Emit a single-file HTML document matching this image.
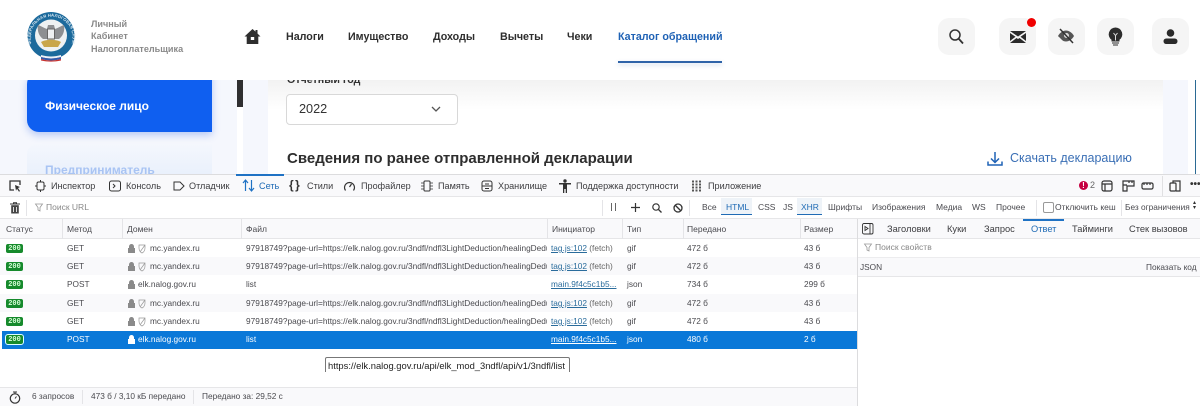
<!DOCTYPE html>
<html lang="ru"><head><meta charset="utf-8"><title>Сеть</title>
<style>
html,body{margin:0;padding:0;width:1200px;height:406px;overflow:hidden;background:#fff}
body{position:relative;font-family:"Liberation Sans",sans-serif}
.a{position:absolute;white-space:nowrap}
.n{font-size:10.7px;font-weight:700;color:#2e2e2e;top:30px;line-height:14px}
.l{font-size:9.1px;font-weight:700;color:#8a8a8a;left:91px;line-height:12px}
.ib{position:absolute;top:18px;width:37px;height:37px;border-radius:11px;background:#f5f5f5}
.t{font-size:9.1px;color:#3d3d40;top:180px;line-height:12px}
.f{font-size:8.5px;color:#4a4a4f;top:202px;line-height:11px}
.h{font-size:8.5px;color:#4a4a4f;top:224px;line-height:11px}
.c{font-size:8.3px;color:#4a4a4f;line-height:11px}
.v{position:absolute;width:1px;background:#e4e4e7}
.b{position:absolute;left:6px;width:17px;height:9px;background:#168a2c;color:#d8ffd8;border-radius:2px;font:700 7px/10px "Liberation Mono",monospace;text-align:center;overflow:hidden}
.lk{color:#2a6c9c;text-decoration:underline}
.g{color:#666}
svg{position:absolute;overflow:visible}
</style></head><body>

<!-- page background -->
<div class="a" style="left:0;top:80px;width:1188px;height:96px;background:#f5f7fd"></div>
<div class="a" style="left:237px;top:80px;width:6px;height:96px;background:#fff"></div>
<div class="a" style="left:237px;top:80px;width:6px;height:27px;background:#2f2f31"></div>
<div class="a" style="left:268px;top:80px;width:895px;height:96px;background:linear-gradient(#f2f2f2,#fff 30px)"></div>
<div class="a" style="left:1195px;top:80px;width:1px;height:94px;background:#2b6a94"></div>

<!-- sidebar -->
<div class="a" style="left:27px;top:72px;width:185px;height:60px;background:#0f5ff0;border-radius:12px 0 0 12px;box-shadow:0 3px 8px rgba(30,90,230,.3)"></div>
<div class="a" style="left:45px;top:99px;font-size:12px;font-weight:700;color:#fff;line-height:14px">Физическое лицо</div>
<div class="a" style="left:27px;top:144px;width:185px;height:32px;background:linear-gradient(#f4f7fd,#e9f0fc);border-radius:10px 0 0 0;overflow:hidden">
  <div class="a" style="left:18px;top:19px;font-size:12px;font-weight:700;color:#a9c4f3;line-height:14px">Предприниматель</div>
</div>

<!-- form -->
<div class="a" style="left:287px;top:74px;font-size:10.7px;font-weight:700;color:#333;line-height:13px;height:13px;clip-path:inset(6px 0 0 0)">Отчетный год</div>
<div class="a" style="left:286px;top:94px;width:170px;height:29px;border:1px solid #d8d8d8;border-radius:4px;background:#fff"></div>
<div class="a" style="left:299px;top:102px;font-size:12.7px;color:#333;line-height:15px">2022</div>
<svg style="left:431px;top:106px" width="10" height="7" viewBox="0 0 10 7"><path d="M1 1l4 4 4-4" fill="none" stroke="#555" stroke-width="1.3"/></svg>
<div class="a" style="left:287px;top:150px;font-size:15px;font-weight:700;color:#2e2e2e;line-height:18px">Сведения по ранее отправленной декларации</div>
<svg style="left:987px;top:151px" width="16" height="16" viewBox="0 0 16 16"><path d="M8 1v10M4 7.500l4 4 4-4M1 10.500v3.500h14v-3.500" fill="none" stroke="#1f62b5" stroke-width="1.500"/></svg>
<div class="a" style="left:1010px;top:151px;font-size:12.5px;color:#3a6fb5;line-height:15px">Скачать декларацию</div>

<!-- header -->
<div class="a" style="left:0;top:0;width:1200px;height:80px;background:#fff"></div>
<svg style="left:27px;top:12px" width="49" height="50" viewBox="0 0 49 50">
  <defs><path id="ring" d="M4.500 32a21 21 0 1 1 40 0"/></defs>
  <circle cx="24" cy="23.500" r="23.500" fill="#1c6a9c"/><circle cx="24" cy="23.500" r="16" fill="#eef1f2"/>
  <text font-family="Liberation Sans" font-size="4.2" font-weight="700" fill="#dbe9f2" letter-spacing=".15"><textPath href="#ring">ФЕДЕРАЛЬНАЯ НАЛОГОВАЯ СЛУЖБА</textPath></text>
  <path d="M11 13c3 1 6 3 9 4l1-4h6l1 4c3-1 6-3 9-4 1 6-1 11-5 14H16c-4-3-6-8-5-14z" fill="#8d8f92"/>
  <rect x="20.500" y="17" width="7" height="10" fill="#eef0f2" stroke="#666"/>
  <path d="M14 30c5-3 15-3 20 0l-3 5H17z" fill="#c9a64a"/>
  <path d="M14 43c7 2 13 2 20 0v2c-7 2-13 2-20 0z" fill="#eef0f6"/>
  <path d="M14 45c7 2 13 2 20 0v2c-7 2-13 2-20 0z" fill="#3458a8"/>
  <path d="M14 47c7 2 13 2 20 0v1.500c-7 1.500-13 1.500-20 0z" fill="#c8332f"/>
</svg>
<div class="a l" style="top:18px">Личный</div>
<div class="a l" style="top:30px">Кабинет</div>
<div class="a l" style="top:43px">Налогоплательщика</div>
<svg style="left:244px;top:28px" width="17" height="17" viewBox="0 0 17 17"><path d="M8.500 1L0.500 8.500h2.200V16h11.600V8.500h2.200L13.500 5.500V2h-2v1.600z" fill="#2e2e2e"/><rect x="6.800" y="9" width="3.400" height="3" fill="#fff"/></svg>
<div class="a n" style="left:286px">Налоги</div>
<div class="a n" style="left:348px">Имущество</div>
<div class="a n" style="left:433px">Доходы</div>
<div class="a n" style="left:500px">Вычеты</div>
<div class="a n" style="left:567px">Чеки</div>
<div class="a n" style="left:618px;color:#1f62b5">Каталог обращений</div>
<div class="a" style="left:618px;top:61px;width:104px;height:2px;background:#2f63a8;box-shadow:0 2px 4px rgba(47,99,168,.25)"></div>

<div class="ib" style="left:938px"></div>
<svg style="left:949px;top:29px" width="15" height="16" viewBox="0 0 15 16"><circle cx="6" cy="6" r="5" fill="none" stroke="#333" stroke-width="1.500"/><path d="M9.500 9.500l4.500 5" stroke="#333" stroke-width="1.800"/></svg>
<div class="ib" style="left:999px"></div>
<svg style="left:1010px;top:31px" width="16" height="12" viewBox="0 0 16 12"><path d="M0 0h16L8 5.500zM0 2l5.500 3.800L0 10zM16 2l-5.500 3.800L16 10zM0 12l6.500-5L8 8l1.500-1L16 12z" fill="#2b2b2b"/></svg>
<div class="a" style="left:1027px;top:18px;width:9px;height:9px;border-radius:50%;background:#f00000"></div>
<div class="ib" style="left:1048px"></div>
<svg style="left:1057px;top:28px" width="18" height="16" viewBox="0 0 18 16"><path d="M1 8c2-3.500 5-5.500 8-5.500s6 2 8 5.500c-2 3.500-5 5.500-8 5.500S3 11.500 1 8z" fill="#555"/><circle cx="9.500" cy="7.500" r="2.500" fill="#ddd"/><path d="M3 1l13 14" stroke="#333" stroke-width="1.500"/><path d="M1 9l6 6" stroke="#f5f5f5" stroke-width="1.500"/></svg>
<div class="ib" style="left:1097px"></div>
<svg style="left:1108px;top:27px" width="15" height="19" viewBox="0 0 15 19"><path d="M7.500 0.500a6.800 6.800 0 0 0-4 12.300v1.700h8v-1.700a6.800 6.800 0 0 0-4-12.300z" fill="#2d2d2d"/><path d="M5.500 6l2 2.500 2-2.500M7.500 8.500v5" stroke="#ddd" fill="none"/><path d="M4 15.500h7v1H4zM5 17.500h5v1H5z" fill="#2d2d2d"/></svg>
<div class="ib" style="left:1152px"></div>
<svg style="left:1163px;top:29px" width="15" height="16" viewBox="0 0 15 16"><circle cx="7.500" cy="4" r="3.800" fill="#2b2b2b"/><rect x="0.500" y="9.500" width="14" height="5.500" rx="2.700" fill="#2b2b2b"/></svg>

<!-- devtools -->
<div class="a" style="left:0;top:174px;width:1200px;height:232px;background:#fff;border-top:1px solid #dcdcde;box-sizing:border-box"></div>
<div class="a" style="left:0;top:175px;width:1200px;height:22px;background:#f9f9fb;border-bottom:1px solid #e6e6e8;box-sizing:border-box"></div>
<div class="a" style="left:236px;top:174px;width:48px;height:2px;background:#1f72c4"></div>

<svg style="left:9px;top:180px" width="12" height="12" viewBox="0 0 12 12"><path d="M11 5V1H1v9h4" fill="none" stroke="#333" stroke-width="1.300"/><path d="M6 5l5 2-2 1 2 3-1 .7-2-3-1 2z" fill="#333"/></svg>
<svg style="left:35px;top:180px" width="11" height="12" viewBox="0 0 11 12"><rect x="2" y="2" width="7" height="8" rx="1.500" fill="none" stroke="#333"/><path d="M5.500 0v2M5.500 10v2M0 6h2M9 6h2" stroke="#333"/></svg>
<div class="a t" style="left:51px">Инспектор</div>
<svg style="left:109px;top:180px" width="12" height="12" viewBox="0 0 12 12"><rect x=".5" y="1" width="11" height="10" rx="2" fill="none" stroke="#333"/><path d="M4 4l2 2-2 2" fill="none" stroke="#333"/></svg>
<div class="a t" style="left:126px">Консоль</div>
<svg style="left:173px;top:180px" width="12" height="12" viewBox="0 0 12 12"><path d="M1 2h6l4 4-4 4H1z" fill="none" stroke="#333"/></svg>
<div class="a t" style="left:189px">Отладчик</div>
<svg style="left:242px;top:179px" width="13" height="13" viewBox="0 0 13 13"><path d="M3.500 12V1M1 4l2.500-3L6 4M9.500 1v11M7 9l2.500 3L12 9" fill="none" stroke="#1f72c4" stroke-width="1.200"/></svg>
<div class="a t" style="left:259px;color:#1f6bb5">Сеть</div>
<div class="a" style="left:289px;top:178px;font-size:12px;font-weight:700;color:#333;line-height:14px;letter-spacing:1.500px">{}</div>
<div class="a t" style="left:307px">Стили</div>
<svg style="left:343px;top:180px" width="13" height="12" viewBox="0 0 13 12"><path d="M2.500 10.500a5 5 0 1 1 8 0M6.500 7l2-3" fill="none" stroke="#333" stroke-width="1.200"/></svg>
<div class="a t" style="left:361px">Профайлер</div>
<svg style="left:421px;top:180px" width="12" height="12" viewBox="0 0 12 12"><rect x="3" y="1" width="6" height="10" rx="1" fill="none" stroke="#333"/><path d="M0 3h3M0 6h3M0 9h3M9 3h3M9 6h3M9 9h3" stroke="#333" stroke-width=".8"/></svg>
<div class="a t" style="left:438px">Память</div>
<svg style="left:481px;top:180px" width="12" height="12" viewBox="0 0 12 12"><rect x="1" y="1" width="10" height="10" rx="2" fill="none" stroke="#333"/><path d="M1 6h10M4 4h4M4 8.500h4" stroke="#333"/></svg>
<div class="a t" style="left:498px">Хранилище</div>
<svg style="left:559px;top:179px" width="12" height="14" viewBox="0 0 12 14"><circle cx="6" cy="2" r="1.700" fill="#333"/><path d="M0 4h12v1.500H8V14H6.700V10H5.300V14H4V5.500H0z" fill="#333"/></svg>
<div class="a t" style="left:576px">Поддержка доступности</div>
<svg style="left:691px;top:180px" width="11" height="12" viewBox="0 0 11 12"><path d="M1 1.500h9M1 4.500h9M1 7.500h9M1 10.500h9" stroke="#555" stroke-width="2" stroke-dasharray="2 1.500" fill="none"/></svg>
<div class="a t" style="left:708px">Приложение</div>

<div class="a" style="left:1079px;top:181px;width:9px;height:9px;border-radius:50%;background:#c50042;color:#fff;font:700 8px/9px 'Liberation Sans',sans-serif;text-align:center">!</div>
<div class="a" style="left:1090px;top:180px;font-size:9px;color:#666;line-height:11px">2</div>
<svg style="left:1101px;top:180px" width="72" height="12" viewBox="0 0 72 12" fill="none" stroke="#333" stroke-width="1.200"><rect x="1" y="1" width="10" height="10" rx="2"/><path d="M1 4h10M4 4v7"/><path d="M22 11V1h11v5h-7v5zM22 5h4M28 1v2M31 1v2"/><rect x="41" y="3" width="11" height="6" rx="1.500"/><path d="M43 3v2M46 3v2M49 3v2"/></svg>
<div class="a" style="left:1162px;top:176px;width:1px;height:20px;background:#e0e0e2"></div>
<svg style="left:1169px;top:180px" width="12" height="12" viewBox="0 0 12 12" fill="none" stroke="#333" stroke-width="1.200"><rect x="1" y="3" width="6" height="8" rx="1"/><path d="M4 3V1h7v10H7"/></svg>
<div class="a" style="left:1190px;top:179px;font-size:10px;font-weight:700;color:#333;line-height:12px;letter-spacing:0">•••</div>

<!-- network toolbar -->
<div class="a" style="left:0;top:197px;width:1200px;height:22px;background:#fff;border-bottom:1px solid #e6e6e8;box-sizing:border-box"></div>
<svg style="left:10px;top:202px" width="10" height="12" viewBox="0 0 10 12"><path d="M0 2h10M3.500 2V.8h3V2" fill="none" stroke="#333"/><path d="M1.200 3.200h7.600v8.300H1.200z" fill="#444"/><path d="M3.500 5v5M6.500 5v5" stroke="#ddd"/></svg>
<div class="v" style="left:26px;top:200px;height:16px"></div>
<svg style="left:35px;top:203px" width="8" height="9" viewBox="0 0 8 9"><path d="M.5 1h7L5 4.500V8L3 7V4.500z" fill="none" stroke="#999" stroke-width=".8"/></svg>
<div class="a f" style="left:46px;color:#888">Поиск URL</div>
<div class="v" style="left:602px;top:200px;height:16px"></div>
<div class="a" style="left:611px;top:203px;width:1px;height:8px;background:#666"></div>
<div class="a" style="left:615px;top:203px;width:1px;height:8px;background:#666"></div>
<svg style="left:631px;top:203px" width="9" height="9" viewBox="0 0 9 9"><path d="M4.500 0v9M0 4.500h9" stroke="#333" stroke-width="1.200"/></svg>
<svg style="left:652px;top:203px" width="10" height="10" viewBox="0 0 10 10"><circle cx="4" cy="4" r="3.200" fill="none" stroke="#333" stroke-width="1.200"/><path d="M6.500 6.500l3 3" stroke="#333" stroke-width="1.300"/></svg>
<svg style="left:673px;top:203px" width="10" height="10" viewBox="0 0 10 10"><circle cx="5" cy="5" r="4" fill="none" stroke="#333" stroke-width="1.300"/><path d="M2 2l6 6" stroke="#333" stroke-width="1.300"/></svg>
<div class="v" style="left:689px;top:200px;height:16px"></div>
<div class="a f" style="left:702px">Все</div>
<div class="a" style="left:721px;top:198px;width:31px;height:17px;background:#eef3f8;border-bottom:1px solid #1f6bb5;box-sizing:border-box"></div>
<div class="a f" style="left:726px;color:#1f6bb5">HTML</div>
<div class="a f" style="left:758px">CSS</div>
<div class="a f" style="left:783px">JS</div>
<div class="a" style="left:797px;top:198px;width:25px;height:17px;background:#eef3f8;border-bottom:1px solid #1f6bb5;box-sizing:border-box"></div>
<div class="a f" style="left:801px;color:#1f6bb5">XHR</div>
<div class="a f" style="left:828px">Шрифты</div>
<div class="a f" style="left:872px">Изображения</div>
<div class="a f" style="left:936px">Медиа</div>
<div class="a f" style="left:972px">WS</div>
<div class="a f" style="left:996px">Прочее</div>
<div class="v" style="left:1036px;top:200px;height:16px"></div>
<div class="a" style="left:1043px;top:202px;width:9px;height:9px;border:1px solid #999;border-radius:2px;background:#fff"></div>
<div class="a f" style="left:1055px">Отключить кеш</div>
<div class="v" style="left:1121px;top:200px;height:16px"></div>
<div class="a f" style="left:1125px;font-size:8.3px">Без ограничения</div>
<div class="a" style="left:1193px;top:201px;font-size:6px;line-height:5px;color:#333;white-space:normal;width:7px">▴<br>▾</div>

<!-- table -->
<div class="a" style="left:0;top:219px;width:857px;height:20px;background:#f9f9fb;border-bottom:1px solid #e6e6e8;box-sizing:border-box"></div>
<div class="a" style="left:857px;top:219px;width:343px;height:20px;background:#f9f9fb;border-bottom:1px solid #e6e6e8;box-sizing:border-box"></div>
<div class="a h" style="left:6px">Статус</div>
<div class="a h" style="left:67px">Метод</div>
<div class="a h" style="left:127px">Домен</div>
<div class="a h" style="left:246px">Файл</div>
<div class="a h" style="left:552px">Инициатор</div>
<div class="a h" style="left:627px">Тип</div>
<div class="a h" style="left:687px">Передано</div>
<div class="a h" style="left:804px">Размер</div>
<div class="v" style="left:62px;top:219px;height:20px"></div>
<div class="v" style="left:122px;top:219px;height:20px"></div>
<div class="v" style="left:241px;top:219px;height:20px"></div>
<div class="v" style="left:547px;top:219px;height:20px"></div>
<div class="v" style="left:622px;top:219px;height:20px"></div>
<div class="v" style="left:683px;top:219px;height:20px"></div>
<div class="v" style="left:800px;top:219px;height:20px"></div>

<div class="a" style="left:0;top:257px;width:857px;height:18px;background:#f9f9fb"></div>
<div class="a" style="left:0;top:294px;width:857px;height:18px;background:#f9f9fb"></div>
<div class="a" style="left:2px;top:331px;width:855px;height:18px;background:#0a78d8"></div>

<!-- row 1 -->
<div class="a b" style="top:244px">200</div><div class="a c" style="left:67px;top:243px">GET</div>
<svg style="left:127px;top:244px" width="19" height="9" viewBox="0 0 19 9"><path d="M2 4V2.500a2.500 2.500 0 0 1 5 0V4h1v5H1V4z" fill="#8a8a8a"/><path d="M12 1h6v3c0 2-1 4-3 5-2-1-3-3-3-5zM13 8l5-7" fill="none" stroke="#999" stroke-width=".7"/></svg>
<div class="a c" style="left:150px;top:243px">mc.yandex.ru</div>
<div class="a c" style="left:246px;top:243px;width:301px;overflow:hidden">97918749?page-url=https://elk.nalog.gov.ru/3ndfl/ndfl3LightDeduction/healingDeduction</div>
<div class="a c" style="left:551px;top:243px"><span class="lk">tag.js:102</span> <span class="g">(fetch)</span></div>
<div class="a c" style="left:627px;top:243px">gif</div><div class="a c" style="left:687px;top:243px">472 б</div><div class="a c" style="left:804px;top:243px">43 б</div>
<!-- row 2 -->
<div class="a b" style="top:262px">200</div><div class="a c" style="left:67px;top:261px">GET</div>
<svg style="left:127px;top:262px" width="19" height="9" viewBox="0 0 19 9"><path d="M2 4V2.500a2.500 2.500 0 0 1 5 0V4h1v5H1V4z" fill="#8a8a8a"/><path d="M12 1h6v3c0 2-1 4-3 5-2-1-3-3-3-5zM13 8l5-7" fill="none" stroke="#999" stroke-width=".7"/></svg>
<div class="a c" style="left:150px;top:261px">mc.yandex.ru</div>
<div class="a c" style="left:246px;top:261px;width:301px;overflow:hidden">97918749?page-url=https://elk.nalog.gov.ru/3ndfl/ndfl3LightDeduction/healingDeduction</div>
<div class="a c" style="left:551px;top:261px"><span class="lk">tag.js:102</span> <span class="g">(fetch)</span></div>
<div class="a c" style="left:627px;top:261px">gif</div><div class="a c" style="left:687px;top:261px">472 б</div><div class="a c" style="left:804px;top:261px">43 б</div>
<!-- row 3 -->
<div class="a b" style="top:280px">200</div><div class="a c" style="left:67px;top:279px">POST</div>
<svg style="left:127px;top:280px" width="9" height="9" viewBox="0 0 9 9"><path d="M2 4V2.500a2.500 2.500 0 0 1 5 0V4h1v5H1V4z" fill="#8a8a8a"/></svg>
<div class="a c" style="left:138px;top:279px">elk.nalog.gov.ru</div>
<div class="a c" style="left:246px;top:279px">list</div>
<div class="a c" style="left:551px;top:279px"><span class="lk">main.9f4c5c1b5...</span></div>
<div class="a c" style="left:627px;top:279px">json</div><div class="a c" style="left:687px;top:279px">734 б</div><div class="a c" style="left:804px;top:279px">299 б</div>
<!-- row 4 -->
<div class="a b" style="top:299px">200</div><div class="a c" style="left:67px;top:298px">GET</div>
<svg style="left:127px;top:299px" width="19" height="9" viewBox="0 0 19 9"><path d="M2 4V2.500a2.500 2.500 0 0 1 5 0V4h1v5H1V4z" fill="#8a8a8a"/><path d="M12 1h6v3c0 2-1 4-3 5-2-1-3-3-3-5zM13 8l5-7" fill="none" stroke="#999" stroke-width=".7"/></svg>
<div class="a c" style="left:150px;top:298px">mc.yandex.ru</div>
<div class="a c" style="left:246px;top:298px;width:301px;overflow:hidden">97918749?page-url=https://elk.nalog.gov.ru/3ndfl/ndfl3LightDeduction/healingDeduction</div>
<div class="a c" style="left:551px;top:298px"><span class="lk">tag.js:102</span> <span class="g">(fetch)</span></div>
<div class="a c" style="left:627px;top:298px">gif</div><div class="a c" style="left:687px;top:298px">472 б</div><div class="a c" style="left:804px;top:298px">43 б</div>
<!-- row 5 -->
<div class="a b" style="top:317px">200</div><div class="a c" style="left:67px;top:316px">GET</div>
<svg style="left:127px;top:317px" width="19" height="9" viewBox="0 0 19 9"><path d="M2 4V2.500a2.500 2.500 0 0 1 5 0V4h1v5H1V4z" fill="#8a8a8a"/><path d="M12 1h6v3c0 2-1 4-3 5-2-1-3-3-3-5zM13 8l5-7" fill="none" stroke="#999" stroke-width=".7"/></svg>
<div class="a c" style="left:150px;top:316px">mc.yandex.ru</div>
<div class="a c" style="left:246px;top:316px;width:301px;overflow:hidden">97918749?page-url=https://elk.nalog.gov.ru/3ndfl/ndfl3LightDeduction/healingDeduction</div>
<div class="a c" style="left:551px;top:316px"><span class="lk">tag.js:102</span> <span class="g">(fetch)</span></div>
<div class="a c" style="left:627px;top:316px">gif</div><div class="a c" style="left:687px;top:316px">472 б</div><div class="a c" style="left:804px;top:316px">43 б</div>
<!-- row 6 -->
<div class="a b" style="top:335px;outline:1px solid #dff;outline-offset:0">200</div><div class="a c" style="left:67px;top:334px;color:#fff">POST</div>
<svg style="left:127px;top:335px" width="9" height="9" viewBox="0 0 9 9"><path d="M2 4V2.500a2.500 2.500 0 0 1 5 0V4h1v5H1V4z" fill="#fff"/></svg>
<div class="a c" style="left:138px;top:334px;color:#fff">elk.nalog.gov.ru</div>
<div class="a c" style="left:246px;top:334px;color:#fff">list</div>
<div class="a c" style="left:551px;top:334px;color:#fff;text-decoration:underline">main.9f4c5c1b5...</div>
<div class="a c" style="left:627px;top:334px;color:#fff">json</div><div class="a c" style="left:687px;top:334px;color:#fff">480 б</div><div class="a c" style="left:804px;top:334px;color:#fff">2 б</div>

<!-- tooltip -->
<div class="a" style="left:325px;top:357px;width:245px;height:15px;border:1px solid #777;border-bottom:0;border-radius:2px 2px 0 0;box-sizing:border-box;background:#fff;font-size:9.4px;line-height:15px;color:#222;padding-left:2px;overflow:hidden">https://elk.nalog.gov.ru/api/elk_mod_3ndfl/api/v1/3ndfl/list</div>

<!-- footer -->
<div class="a" style="left:0;top:387px;width:857px;height:19px;background:#f9f9fb;border-top:1px solid #e6e6e8;box-sizing:border-box"></div>
<svg style="left:9px;top:391px" width="12" height="13" viewBox="0 0 12 13"><circle cx="6" cy="7.500" r="4.700" fill="none" stroke="#333" stroke-width="1.200"/><path d="M4 1h4M6 1v2M6 7.500l1.500-2" stroke="#333"/></svg>
<div class="a c" style="left:32px;top:391px">6 запросов</div>
<div class="v" style="left:82px;top:390px;height:14px"></div>
<div class="a c" style="left:91px;top:391px">473 б / 3,10 кБ передано</div>
<div class="v" style="left:193px;top:390px;height:14px"></div>
<div class="a c" style="left:202px;top:391px">Передано за: 29,52 с</div>

<!-- right panel -->
<div class="a" style="left:857px;top:219px;width:1px;height:187px;background:#dcdcde"></div>
<svg style="left:862px;top:223px" width="12" height="12" viewBox="0 0 12 12" fill="none" stroke="#333" stroke-width=".9"><rect x=".5" y=".5" width="10.500" height="10.500" rx="1.500"/><path d="M8 .5v10.500"/><path d="M3 3.500l3 2-3 2z"/></svg>
<div class="a t" style="left:887px;top:223px;font-size:9.3px">Заголовки</div>
<div class="a t" style="left:947px;top:223px;font-size:9.3px">Куки</div>
<div class="a t" style="left:984px;top:223px;font-size:9.3px">Запрос</div>
<div class="a" style="left:1023px;top:219px;width:41px;height:2px;background:#1f72c4"></div>
<div class="a t" style="left:1031px;top:223px;font-size:9.3px;color:#1f6bb5">Ответ</div>
<div class="a t" style="left:1072px;top:223px;font-size:9.3px">Тайминги</div>
<div class="a t" style="left:1129px;top:223px;font-size:9.3px">Стек вызовов</div>
<svg style="left:864px;top:243px" width="8" height="9" viewBox="0 0 8 9"><path d="M.5 1h7L5 4.500V8L3 7V4.500z" fill="none" stroke="#999" stroke-width=".8"/></svg>
<div class="a f" style="left:875px;top:242px;color:#888">Поиск свойств</div>
<div class="a" style="left:858px;top:257px;width:342px;height:20px;background:#f9f9fb;border-top:1px solid #ececee;border-bottom:1px solid #e6e6e8;box-sizing:border-box"></div>
<div class="a c" style="left:860px;top:262px">JSON</div>
<div class="a c" style="left:1146px;top:262px">Показать код</div>

</body></html>
